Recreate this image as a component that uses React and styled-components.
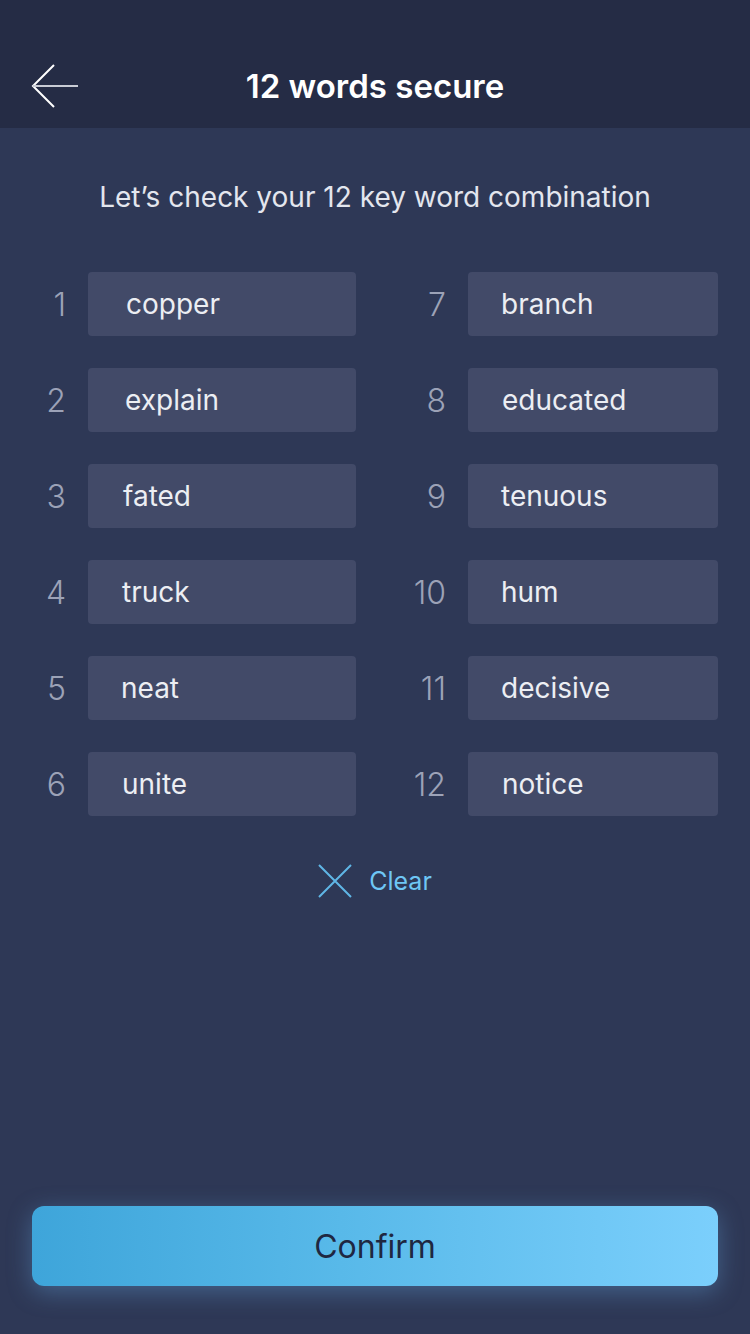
import React from "react";
import styled, { createGlobalStyle } from "styled-components";

const GlobalStyle = createGlobalStyle`
  html, body { margin: 0; padding: 0; background: #2e3856; }
  body { font-family: "Inter", "Roboto", "Liberation Sans", sans-serif; -webkit-font-smoothing: antialiased; }
  * { box-sizing: border-box; }
`;

const Screen = styled.div`
  width: 750px;
  height: 1334px;
  display: flex;
  flex-direction: column;
  background: #2e3856;
  overflow: hidden;
`;

const Header = styled.header`
  height: 128px;
  flex: none;
  background: #252c45;
  display: grid;
  grid-template-columns: 120px 1fr 120px;
  align-items: center;
  padding-top: 44px;
`;

const BackButton = styled.button`
  width: 80px;
  height: 60px;
  margin-left: 31px;
  padding: 0;
  border: 0;
  background: none;
  display: flex;
  align-items: center;
  justify-content: flex-start;
  cursor: pointer;
`;

const Title = styled.h1`
  margin: 0;
  text-align: center;
  color: #ffffff;
  font-size: 33px;
  font-weight: 600;
  letter-spacing: 0;
`;

const Subtitle = styled.p`
  margin: 51px 0 0;
  text-align: center;
  color: #e3e6ee;
  font-size: 28px;
  font-weight: 400;
  line-height: 36px;
  letter-spacing: 0;
`;

const WordGrid = styled.div`
  margin-top: 57px;
  padding: 0 32px;
  display: grid;
  grid-template-columns: 34px 268px 68px 250px;
  grid-auto-rows: 64px;
  column-gap: 22px;
  row-gap: 32px;
`;

const Index = styled.span`
  align-self: center;
  text-align: right;
  color: #9ca2b7;
  font-size: 32px;
  font-weight: 300;
`;

const WordBox = styled.div`
  background: #424a68;
  border-radius: 4px;
  display: flex;
  align-items: center;
  padding-left: ${(p) => p.$pad}px;
  color: #eceef3;
  font-size: 28px;
  font-weight: 400;
`;

const ClearButton = styled.button`
  margin: 48px auto 0;
  border: 0;
  background: none;
  padding: 0;
  display: flex;
  align-items: center;
  gap: 17px;
  color: #6ec6f5;
  font-family: inherit;
  font-size: 25px;
  cursor: pointer;
`;

const Footer = styled.div`
  margin-top: auto;
  padding: 0 32px 48px;
`;

const ConfirmButton = styled.button`
  width: 100%;
  height: 80px;
  border: 0;
  border-radius: 12px;
  background: linear-gradient(90deg, #3ea5da 0%, #58b9e9 45%, #7bcffc 100%);
  box-shadow: 0 6px 24px rgba(110, 180, 240, 0.35);
  color: #1f2741;
  font-family: inherit;
  font-size: 32px;
  font-weight: 400;
  cursor: pointer;
`;

const left = [
  ["copper", 38],
  ["explain", 37],
  ["fated", 35],
  ["truck", 34],
  ["neat", 33],
  ["unite", 34],
];
const right = [
  ["branch", 33],
  ["educated", 34],
  ["tenuous", 33],
  ["hum", 33],
  ["decisive", 33],
  ["notice", 34],
];

function BackArrow() {
  return (
    <svg width="50" height="46" viewBox="0 0 50 46" fill="none">
      <path d="M23 2 L2 23 L23 44" stroke="#ffffff" strokeWidth="2" />
      <path d="M2 23 H47" stroke="#c9ccd5" strokeWidth="2" />
    </svg>
  );
}

function CrossIcon() {
  return (
    <svg width="34" height="34" viewBox="0 0 34 34" fill="none">
      <path d="M1 1 L33 33 M33 1 L1 33" stroke="#5fb6e6" strokeWidth="2" />
    </svg>
  );
}

export default function App() {
  return (
    <Screen>
      <GlobalStyle />
      <Header>
        <BackButton aria-label="Back">
          <BackArrow />
        </BackButton>
        <Title>12 words secure</Title>
        <span />
      </Header>
      <Subtitle>Let’s check your 12 key word combination</Subtitle>
      <WordGrid>
        {left.map(([w, p], i) => (
          <React.Fragment key={w}>
            <Index>{i + 1}</Index>
            <WordBox $pad={p}>{w}</WordBox>
            <Index>{i + 7}</Index>
            <WordBox $pad={right[i][1]}>{right[i][0]}</WordBox>
          </React.Fragment>
        ))}
      </WordGrid>
      <ClearButton>
        <CrossIcon />
        Clear
      </ClearButton>
      <Footer>
        <ConfirmButton>Confirm</ConfirmButton>
      </Footer>
    </Screen>
  );
}
